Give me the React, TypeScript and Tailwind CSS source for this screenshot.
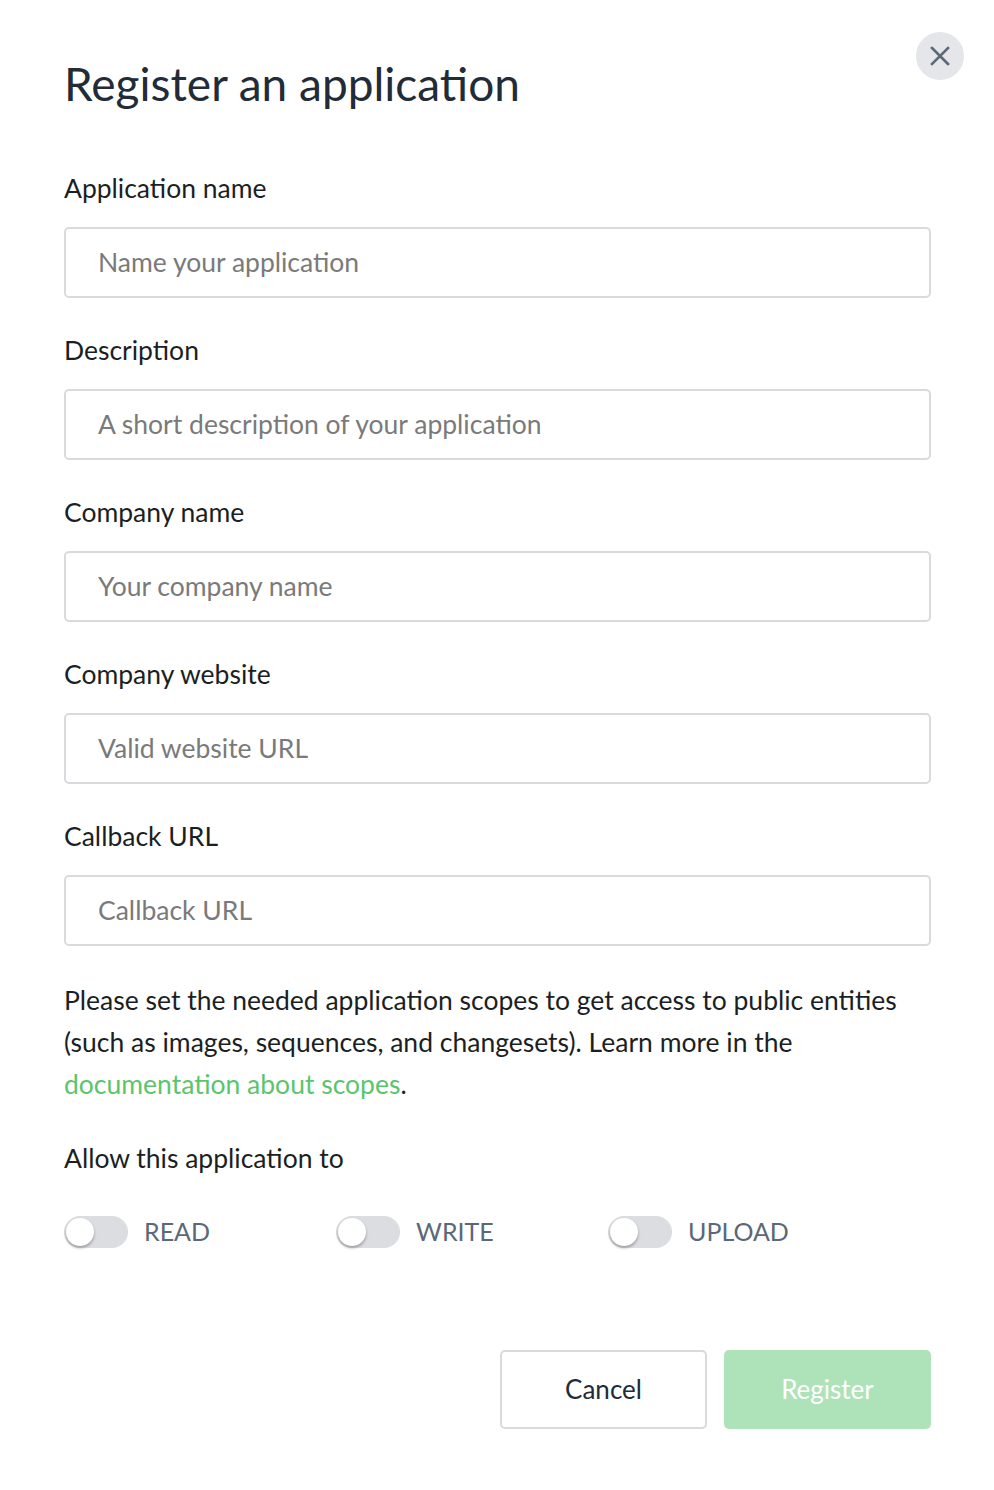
import React from "react";

const font = { fontFamily: "Lato, 'Noto Sans', sans-serif" };

function Field({ label, placeholder }: { label: string; placeholder: string }) {
  return (
    <div className="flex flex-col">
      <div className="h-[38px] flex items-center text-[26.5px] text-[#1b1f24]">{label}</div>
      <div className="mt-[19px] h-[71px] rounded-[5px] border-2 border-[#d9dade] flex items-center px-[32px] text-[26.5px] text-[#7a7a7a]">
        {placeholder}
      </div>
    </div>
  );
}

function Toggle({ label }: { label: string }) {
  return (
    <div className="flex items-center gap-[16px] w-[272px]">
      <div className="relative w-[64px] h-[32px] rounded-full bg-[#dcdde1]">
        <div className="absolute left-[2px] top-[2px] w-[28px] h-[28px] rounded-full bg-white shadow-[0_2px_3px_rgba(0,0,0,0.3)]" />
      </div>
      <span className="text-[25px] text-[#5b6878]">{label}</span>
    </div>
  );
}

export default function App() {
  return (
    <div className="w-[994px] h-[1490px] bg-white relative" style={font}>
      <button className="absolute left-[916px] top-[32px] w-[48px] h-[48px] rounded-full bg-[#e4e6ea] flex items-center justify-center">
        <svg width="20" height="20" viewBox="0 0 20 20" fill="none" stroke="#5d6877" strokeWidth="2.6" strokeLinecap="square">
          <path d="M2 2 L18 18 M18 2 L2 18" />
        </svg>
      </button>
      <div className="pl-[64px] pr-[63px] pt-[56px] flex flex-col">
        <h1 className="text-[46px] leading-[56px] text-[#222c38]">Register an application</h1>
        <div className="mt-[58px] flex flex-col gap-[34px]">
          <Field label="Application name" placeholder="Name your application" />
          <Field label="Description" placeholder="A short description of your application" />
          <Field label="Company name" placeholder="Your company name" />
          <Field label="Company website" placeholder="Valid website URL" />
          <Field label="Callback URL" placeholder="Callback URL" />
        </div>
        <p className="mt-[33px] text-[26.5px] leading-[42px] text-[#1b1f24]">
          Please set the needed application scopes to get access to public entities (such as images, sequences, and changesets). Learn more in the{" "}
          <span className="text-[#5cc46b]">documentation about scopes</span>.
        </p>
        <div className="mt-[35px] h-[38px] flex items-center text-[26.5px] text-[#1b1f24]">Allow this application to</div>
        <div className="mt-[35px] flex">
          <Toggle label="READ" />
          <Toggle label="WRITE" />
          <Toggle label="UPLOAD" />
        </div>
        <div className="mt-[99px] flex justify-end gap-[17px]">
          <button className="w-[207px] h-[79px] rounded-[5px] border-2 border-[#d9dade] bg-white text-[26px] text-[#222c38]">
            Cancel
          </button>
          <button className="w-[207px] h-[79px] rounded-[5px] bg-[#aee3b9] text-[26px] text-white">
            Register
          </button>
        </div>
      </div>
    </div>
  );
}
